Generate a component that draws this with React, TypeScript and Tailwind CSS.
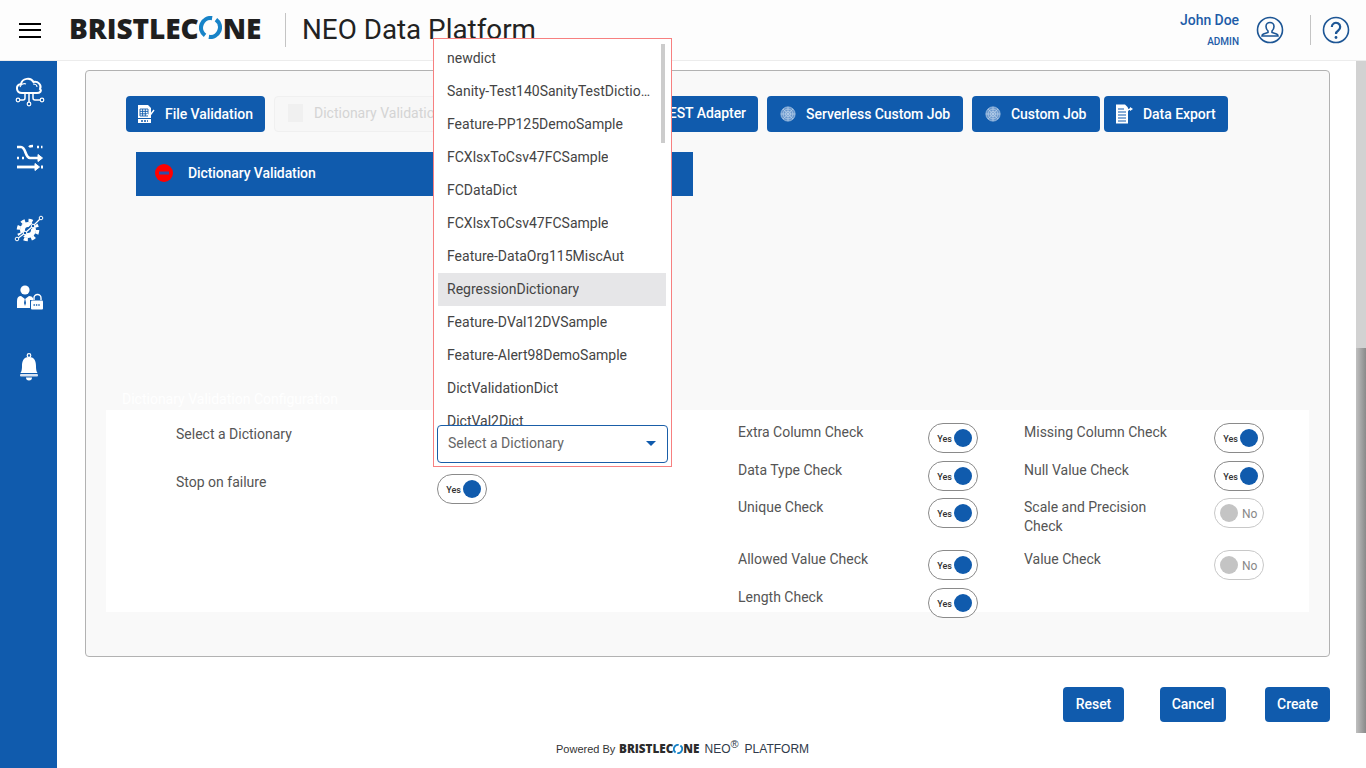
import React from "react";

const I = { xmlns: "http://www.w3.org/2000/svg" };

function Logo({ small }: { small?: boolean }) {
  return (
    <span className={small ? "inline-flex items-center text-[11.7px] leading-none font-extrabold text-[#2b2b2b] [font-family:'Open_Sans',sans-serif]" : "inline-flex items-center text-[28px] leading-none font-extrabold tracking-[-0.05px] text-[#1f1f1f] [font-family:'Open_Sans',sans-serif]"}>
      BRISTLEC
      <svg {...I} viewBox="0 0 24 24" className={small ? "w-[10px] h-[10px]" : "w-[23px] h-[23px] mx-[0.5px]"}>
        <path d="M13.7 2.2 A10 10 0 0 0 6.300 20.200" fill="none" stroke="#1783c8" strokeWidth="4.4" />
        <path d="M10.300 21.800 A10 10 0 0 0 17.700 3.800" fill="none" stroke="#1783c8" strokeWidth="4.4" />
      </svg>
      NE
    </span>
  );
}

function CloudIcon() {
  return (
    <svg {...I} viewBox="0 0 32 32" className="w-[32px] h-[32px]" fill="none" stroke="#fff">
      <path d="M9 18 C3 18 2 10 8 9 C9 3 18 2 20.5 7 C25 6 29 10 27 14 C29 16 27 18 24 18 Z" strokeWidth="2" fill="#105bad" />
      <path d="M7 12 C8 9 11 8 13 9 M20 9 C22 9 24 10 24 12" strokeWidth="1.100" />
      <path d="M12 18 v5 q0 2 -2 2 H7 M16 18 v9 M20 18 v5 q0 2 2 2 h5" strokeWidth="1.500" />
      <circle cx="5" cy="25" r="1.800" strokeWidth="1.200" />
      <circle cx="16" cy="29" r="1.800" strokeWidth="1.200" />
      <circle cx="29" cy="25" r="1.800" strokeWidth="1.200" />
    </svg>
  );
}

function ShuffleIcon() {
  return (
    <svg {...I} viewBox="0 0 32 32" className="w-[32px] h-[32px] -mt-[1px] mb-[1px]" fill="none" stroke="#fff">
      <path d="M4 4 h4 c5 0 4 11 9 11 h9" strokeWidth="2.600" />
      <path d="M25 11.500 l4.500 3.500 -4.500 3.500 Z" fill="#fff" strokeWidth="1" />
      <path d="M4 15 h2 M9 15 h2" strokeWidth="2.400" />
      <path d="M16 4 c1 -1 2 -1 4 -1 M24 4 h2 M28 4 h1.500" strokeWidth="2.400" />
      <path d="M4 24 h19" strokeWidth="2.800" />
      <path d="M22 20.500 l4.500 3.500 -4.500 3.500 Z" fill="#fff" strokeWidth="1" />
      <path d="M28 24 h2" strokeWidth="2.800" />
    </svg>
  );
}

function GearIcon() {
  return (
    <svg {...I} viewBox="0 0 32 32" className="w-[32px] h-[32px]" fill="none">
      <circle cx="15" cy="17" r="8" fill="#fff" />
      <circle cx="15" cy="17" r="9.500" stroke="#fff" strokeWidth="3.600" strokeDasharray="4 3.500" />
      <circle cx="15" cy="17" r="3" fill="#105bad" />
      <path d="M4 26 L12 20 L19 13 L28 5" stroke="#105bad" strokeWidth="3.400" />
      <path d="M4 26 L12 20 L20 13 L28 5" stroke="#fff" strokeWidth="1.200" />
      <circle cx="4" cy="26" r="1.800" fill="#105bad" stroke="#fff" />
      <circle cx="12" cy="20" r="1.800" fill="#105bad" stroke="#fff" />
      <circle cx="20" cy="13" r="1.800" fill="#105bad" stroke="#fff" />
      <circle cx="28" cy="5" r="1.800" fill="#105bad" stroke="#fff" />
    </svg>
  );
}

function UserLockIcon() {
  return (
    <svg {...I} viewBox="0 0 32 32" className="w-[32px] h-[32px] -mt-[1px] mb-[1px]" fill="none">
      <circle cx="12" cy="9" r="4.600" fill="#fff" />
      <path d="M4 27 V20 Q4 15 8 15 L12 18 L16 15 Q19 15 20 17 V19 H17 V27 Z" fill="#fff" />
      <path d="M12 17 l-1 5 1 3 1 -3 Z" fill="#105bad" />
      <path d="M21 19 v-2 a3.500 3.500 0 0 1 7 0 v2" stroke="#fff" strokeWidth="1.400" />
      <rect x="18" y="19.500" width="12" height="9" rx="1" fill="#fff" />
      <path d="M20.500 24 h7" stroke="#105bad" strokeWidth="1.500" strokeDasharray="1.400 1" />
    </svg>
  );
}

function BellIcon() {
  return (
    <svg {...I} viewBox="0 0 32 32" className="w-[32px] h-[32px]" fill="none">
      <circle cx="16" cy="4.500" r="1.800" stroke="#fff" strokeWidth="1.200" />
      <path d="M16 6 C10 6 9 11 9 15 C9 20 8 21 7.500 22 H24.500 C24 21 23 20 23 15 C23 11 22 6 16 6 Z" fill="#fff" />
      <rect x="7" y="23" width="18" height="2.600" rx="1" fill="#d8e2f0" />
      <path d="M13 26.500 H19 A3 3 0 0 1 13 26.500 Z" fill="#fff" />
    </svg>
  );
}

function FileIcon() {
  return (
    <svg {...I} viewBox="0 0 18 20" className="w-[18px] h-[20px]">
      <path d="M1 1 H11 L14 4 V19 H1 Z" fill="#fff" />
      <path d="M3 5 H11 V12 H3 Z M5.600 5 V12 M8.300 5 V12 M3 7.400 H11 M3 9.800 H11" fill="none" stroke="#105bad" strokeWidth="0.900" />
      <path d="M10 10 L12.500 12 L17 6" fill="none" stroke="#fff" strokeWidth="1.400" />
      <rect x="1" y="14" width="13" height="1" fill="#105bad" />
      <path d="M4 17 H11" stroke="#105bad" strokeWidth="1.400" strokeDasharray="2 1" />
    </svg>
  );
}

function MeshIcon() {
  return (
    <svg {...I} viewBox="0 0 18 18" className="w-[16px] h-[16px]" fill="none" stroke="#b9d0ea" strokeWidth="0.800">
      <circle cx="9" cy="9" r="8" fill="#6a97cc" />
      <circle cx="9" cy="9" r="5.500" />
      <circle cx="9" cy="9" r="3" />
      <path d="M1 9 H17 M9 1 V17 M3.300 3.300 L14.700 14.700 M14.700 3.300 L3.300 14.700" />
    </svg>
  );
}

function ExportIcon() {
  return (
    <svg {...I} viewBox="0 0 18 20" className="w-[18px] h-[20px]">
      <path d="M1 0.500 H10 L13 3.500 V19.500 H1 Z" fill="#fff" />
      <path d="M3 5 H9 M3 8 H11 M3 11 H11 M3 14 H11 M3 17 H11" stroke="#105bad" strokeWidth="1.100" />
      <path d="M12 9 Q12 5 16 5" fill="none" stroke="#fff" strokeWidth="1.300" />
      <path d="M15 3 L18 5 L15 7 Z" fill="#fff" />
    </svg>
  );
}

function NavButton({ icon, label, className }: { icon?: React.ReactNode; label: string; className: string }) {
  return (
    <button className={"h-[36px] flex items-center rounded-[4px] bg-[#105bad] text-white text-[14px] font-medium tracking-[-0.05px] " + className}>
      {icon}
      <span>{label}</span>
    </button>
  );
}

function Toggle({ on = true }: { on?: boolean }) {
  if (on) {
    return (
      <span className="shrink-0 w-[50px] h-[30px] rounded-full border border-[#8a8a8a] bg-white flex items-center justify-end pr-[5px] gap-[2px]">
        <span className="mt-[3px] text-[9px] font-medium text-[#333]">Yes</span>
        <span className="w-[18px] h-[18px] rounded-full bg-[#105bad]" />
      </span>
    );
  }
  return (
    <span className="shrink-0 w-[50px] h-[30px] rounded-full border border-[#c8c8c8] bg-white flex items-center pl-[5px] gap-[4px]">
      <span className="w-[18px] h-[18px] rounded-full bg-[#c4c4c4]" />
      <span className="mt-[1px] text-[12px] text-[#888]">No</span>
    </span>
  );
}

function Check({ label, on = true }: { label: string; on?: boolean }) {
  return (
    <div className="w-[240px] flex justify-between items-start">
      <span className="w-[160px] text-[14px] leading-[19px] text-[#555]">{label}</span>
      <Toggle on={on} />
    </div>
  );
}

const items = [
  "newdict",
  "Sanity-Test140SanityTestDictionary",
  "Feature-PP125DemoSample",
  "FCXlsxToCsv47FCSample",
  "FCDataDict",
  "FCXlsxToCsv47FCSample",
  "Feature-DataOrg115MiscAut",
  "RegressionDictionary",
  "Feature-DVal12DVSample",
  "Feature-Alert98DemoSample",
  "DictValidationDict",
  "DictVal2Dict",
];

export default function App() {
  return (
    <div className="relative w-[1366px] h-[768px] overflow-hidden bg-white flex flex-col [font-family:Roboto,sans-serif]">
      <header className="h-[61px] shrink-0 bg-[#fdfdfd] border-b border-[#ececec] flex items-center">
        <div className="ml-[19px] w-[22px] flex flex-col gap-[4.5px]">
          <span className="h-[2px] bg-black" />
          <span className="h-[2px] bg-black" />
          <span className="h-[2px] bg-black" />
        </div>
        <div className="ml-[28px] w-[216px] -mt-[1px]">
          <Logo />
        </div>
        <span className="w-px h-[34px] bg-[#c4c4c4]" />
        <span className="ml-[16px] text-[27.8px] leading-none text-[#222]">NEO Data Platform</span>
        <div className="ml-auto flex flex-col items-end w-[60px] mr-[17px] -mt-[2px]">
          <span className="text-[14px] leading-[18px] font-medium text-[#1e5ca8] tracking-[-0.05px]">John Doe</span>
          <span className="mt-[7px] text-[10px] leading-[12px] font-medium text-[#1e5ca8]">ADMIN</span>
        </div>
        <svg {...I} viewBox="0 0 28 28" className="w-[28px] h-[28px]" fill="none" stroke="#1d5695" strokeWidth="1.600">
          <circle cx="14" cy="14" r="12.500" />
          <path d="M14 6.500 a4 4 0 0 1 4 4 c0 2 -1 3.500 -2 4.500 v1.500 l4.500 1.500 q1.500 .6 1.500 2 H6 q0 -1.400 1.500 -2 L12 16.500 V15 c-1 -1 -2 -2.500 -2 -4.500 a4 4 0 0 1 4 -4 Z" />
        </svg>
        <span className="ml-[26px] w-px h-[30px] bg-[#c4c4c4]" />
        <svg {...I} viewBox="0 0 28 28" className="ml-[11px] mr-[16px] w-[28px] h-[28px]" fill="none" stroke="#1d5695">
          <circle cx="14" cy="14" r="12.500" strokeWidth="1.600" />
          <path d="M9.800 11 a4.200 4.200 0 1 1 6.500 3.500 c-1.500 1 -2.300 1.800 -2.300 3.500" strokeWidth="2.200" />
          <circle cx="14" cy="21.500" r="1.400" fill="#1d5695" stroke="none" />
        </svg>
      </header>

      <div className="flex-1 flex min-h-0">
        <aside className="w-[57px] shrink-0 bg-[#105bad] flex flex-col items-center pt-[14px] gap-[37px]">
          <CloudIcon />
          <ShuffleIcon />
          <GearIcon />
          <UserLockIcon />
          <BellIcon />
        </aside>

        <main className="flex-1 min-w-0">
          <section className="mt-[9px] ml-[28px] w-[1245px] h-[587px] rounded-[4px] border border-[#b2b2b2] bg-[#f9f9f9]">
            <div className="mt-[25px] ml-[40px] flex items-center">
              <NavButton label="File Validation" icon={<span className="mr-[10px]"><FileIcon /></span>} className="w-[139px] pl-[11px]" />
              <button className="ml-[9px] w-[181px] h-[36px] pb-[2px] flex items-center rounded-[4px] border border-[#f0f0f0] bg-[#f7f7f7] text-[#d4d4d4] text-[14px] pl-[13px] gap-[11px]">
                <span className="w-[15px] h-[18px] bg-[#f0f0f0]" />
                Dictionary Validation
              </button>
              <NavButton label="REST Adapter" className="ml-[167px] w-[136px] justify-end pr-[12px] pb-[2px]" />
              <NavButton label="Serverless Custom Job" icon={<span className="mr-[10px] flex"><MeshIcon /></span>} className="ml-[9px] w-[196px] pl-[13px]" />
              <NavButton label="Custom Job" icon={<span className="mr-[10px] flex"><MeshIcon /></span>} className="ml-[9px] w-[128px] pl-[13px]" />
              <NavButton label="Data Export" icon={<span className="mr-[10px] flex"><ExportIcon /></span>} className="ml-[4px] w-[124px] pl-[11px]" />
            </div>

            <div className="mt-[20px] ml-[50px] w-[557px] h-[44px] pb-[2px] bg-[#105bad] flex items-center pl-[19px] text-white text-[14px] font-medium tracking-[-0.1px]">
              <svg {...I} viewBox="0 0 18 18" className="w-[18px] h-[18px] mr-[15px]">
                <circle cx="9" cy="9" r="9" fill="#ff0000" />
                <rect x="4" y="7.500" width="10" height="3" fill="#2f4fa8" />
              </svg>
              Dictionary Validation
            </div>

            <h2 className="mt-[196px] ml-[36px] h-[14px] text-[14px] leading-[14px] font-normal text-white">Dictionary Validation Configuration</h2>

            <div className="mt-[4px] ml-[20px] w-[1203px] h-[202px] bg-white flex pt-[13px] pl-[70px]">
              <div className="w-[562px] shrink-0 flex flex-col">
                <div className="h-[51px] flex items-start">
                  <span className="w-[261px] pt-[2px] text-[14px] leading-[19px] text-[#555]">Select a Dictionary</span>
                  <span className="w-[231px] h-[38px]" />
                </div>
                <div className="flex items-start">
                  <span className="w-[261px] -mt-[1px] text-[14px] leading-[19px] text-[#555]">Stop on failure</span>
                  <Toggle />
                </div>
              </div>
              <div className="grid grid-cols-[240px_240px] grid-rows-[38px_37px_52px_38px_30px] gap-x-[46px]">
                <Check label="Extra Column Check" />
                <Check label="Missing Column Check" />
                <Check label="Data Type Check" />
                <Check label="Null Value Check" />
                <Check label="Unique Check" />
                <Check label="Scale and Precision Check" on={false} />
                <Check label="Allowed Value Check" />
                <Check label="Value Check" on={false} />
                <Check label="Length Check" />
              </div>
            </div>
          </section>

          <div className="mt-[30px] ml-[28px] w-[1245px] flex justify-end tracking-[-0.05px]">
            <button className="w-[61px] h-[35px] rounded-[4px] bg-[#105bad] text-white text-[14px] font-medium">Reset</button>
            <button className="ml-[36px] w-[66px] h-[35px] rounded-[4px] bg-[#105bad] text-white text-[14px] font-medium">Cancel</button>
            <button className="ml-[39px] w-[65px] h-[35px] rounded-[4px] bg-[#105bad] text-white text-[14px] font-medium">Create</button>
          </div>

          <footer className="mt-[18px] pl-[499px] flex items-center [font-family:'Liberation_Sans',sans-serif] text-[#333]">
            <span className="text-[11px] w-[63px]">Powered By</span>
            <Logo small />
            <span className="ml-[5px] text-[12px] text-[#2f3a4a]">NEO<sup className="text-[11px] -top-[5px]">®</sup></span>
            <span className="ml-[6px] text-[12px] text-[#2f3a4a]">PLATFORM</span>
          </footer>
        </main>

        <div className="w-[10px] shrink-0 flex flex-col">
          <div className="h-[287px] bg-[#d2d2d2]" />
          <div className="h-[385px] bg-gradient-to-r from-[#c0c0c0] to-[#8a8a8a]" />
        </div>
      </div>

      <div className="absolute left-[433px] top-[38px] w-[239px] h-[429px] border border-[#f78080] bg-white flex flex-col">
        <div className="relative h-[386px] shrink-0 overflow-hidden pt-[3px] pl-[4px]">
          {items.map((t, i) => (
            <div key={i} className={"w-[228px] h-[33px] shrink-0 pl-[9px] pr-[15px] flex items-center text-[14px] text-[#444] " + (t === "RegressionDictionary" ? "bg-[#e6e6e8]" : "")}>
              <span className="truncate">{t}</span>
            </div>
          ))}
          <span className="absolute right-[6px] top-[5px] w-[4px] h-[99px] bg-[#cccccc]" />
        </div>
        <div className="ml-[3px] w-[231px] h-[38px] shrink-0 pb-[1px] rounded-[4px] border border-[#1a5ea8] bg-white flex items-center pl-[10px] pr-[11px] text-[14px] text-[#666]">
          <span className="flex-1">Select a Dictionary</span>
          <span className="w-0 h-0 border-l-[5px] border-r-[5px] border-t-[5px] border-l-transparent border-r-transparent border-t-[#105bad]" />
        </div>
      </div>
    </div>
  );
}
